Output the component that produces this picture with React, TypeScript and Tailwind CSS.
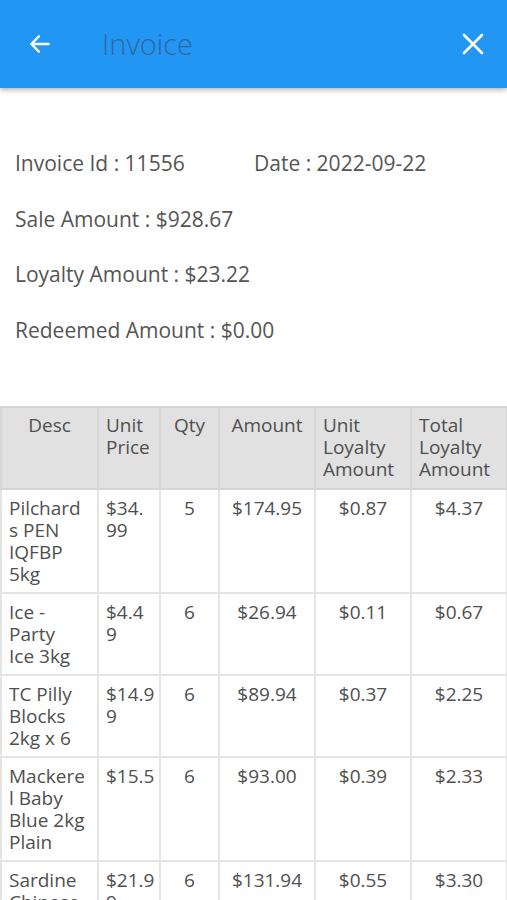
import React from 'react';

// desc / price are kept as the wrapped lines the app shows
type Line = {
  desc: string[];
  price: string[];
  qty: number;
  amount: string;
  unitLoyalty: string;
  totalLoyalty: string;
};

const lines: Line[] = [
  { desc: ['Pilchard', 's PEN', 'IQFBP', '5kg'], price: ['$34.', '99'], qty: 5, amount: '$174.95', unitLoyalty: '$0.87', totalLoyalty: '$4.37' },
  { desc: ['Ice -', 'Party', 'Ice 3kg'], price: ['$4.4', '9'], qty: 6, amount: '$26.94', unitLoyalty: '$0.11', totalLoyalty: '$0.67' },
  { desc: ['TC Pilly', 'Blocks', '2kg x 6'], price: ['$14.9', '9'], qty: 6, amount: '$89.94', unitLoyalty: '$0.37', totalLoyalty: '$2.25' },
  { desc: ['Mackere', 'l Baby', 'Blue 2kg', 'Plain'], price: ['$15.5'], qty: 6, amount: '$93.00', unitLoyalty: '$0.39', totalLoyalty: '$2.33' },
  { desc: ['Sardine', 'Chinese', '5kg'], price: ['$21.9', '9'], qty: 6, amount: '$131.94', unitLoyalty: '$0.55', totalLoyalty: '$3.30' },
];

const headers = ['Desc', 'Unit Price', 'Qty', 'Amount', 'Unit Loyalty Amount', 'Total Loyalty Amount'];

const cell = 'border-2 border-[#e4e4e4] pt-[7px] pb-[7px] align-top';

export default function App() {
  return (
    <div className="min-h-[900px] bg-white text-[#555]" style={{ fontFamily: '"Open Sans", "Noto Sans", sans-serif' }}>
      <header className="h-[88px] bg-[#2196f3] flex items-center pl-[27px] pr-[21px] shadow-[0_2px_5px_rgba(0,0,0,0.3)] relative z-10">
        <button className="w-[26px] h-[26px] flex items-center justify-center text-white">
          <svg width="26" height="26" viewBox="0 0 24 24" fill="none" stroke="currentColor" strokeWidth={2.2} strokeLinecap="round" strokeLinejoin="round">
            <path d="M20 12H4M11 5l-7 7 7 7" />
          </svg>
        </button>
        <h1 className="ml-[49px] text-[29px] font-light text-[#3467a0] flex-1">Invoice</h1>
        <button className="w-[26px] h-[26px] flex items-center justify-center text-white">
          <svg width="24" height="24" viewBox="0 0 24 24" fill="none" stroke="currentColor" strokeWidth={2.6} strokeLinecap="round">
            <path d="M3 3l18 18M21 3L3 21" />
          </svg>
        </button>
      </header>

      <div className="px-[15px] pt-[61px] flex flex-col gap-[27.5px] text-[21px] leading-[28px]">
        <div className="flex">
          <span className="w-[239px]">Invoice Id : 11556</span>
          <span>Date : 2022-09-22</span>
        </div>
        <p>Sale Amount : $928.67</p>
        <p>Loyalty Amount : $23.22</p>
        <p>Redeemed Amount : $0.00</p>
      </div>

      <table className="mt-[62px] w-[506px] table-fixed border-collapse text-[19px] leading-[22px] text-[#4f4f4f]">
        <colgroup>
          <col className="w-[97px]" />
          <col className="w-[62px]" />
          <col className="w-[59px]" />
          <col className="w-[96px]" />
          <col className="w-[96px]" />
          <col className="w-[96px]" />
        </colgroup>
        <thead>
          <tr className="bg-[#e1e1e1]">
            {headers.map((h) => (
              <th key={h} className="border-2 border-[#d6d6d6] px-[7px] pt-[6px] pb-[8px] font-normal text-center align-top">
                <span className="inline-block text-left">{h}</span>
              </th>
            ))}
          </tr>
        </thead>
        <tbody>
          {lines.map((l) => (
            <tr key={l.amount}>
              <td className={`${cell} pl-[7px] pr-[2px]`}>
                {l.desc.map((d) => (
                  <span key={d} className="block whitespace-nowrap">{d}</span>
                ))}
              </td>
              <td className={`${cell} pl-[7px] pr-[2px]`}>
                {l.price.map((p) => (
                  <span key={p} className="block whitespace-nowrap">{p}</span>
                ))}
              </td>
              <td className={`${cell} px-[4px] text-center`}>{l.qty}</td>
              <td className={`${cell} px-[4px] text-center`}>{l.amount}</td>
              <td className={`${cell} px-[4px] text-center`}>{l.unitLoyalty}</td>
              <td className={`${cell} px-[4px] text-center`}>{l.totalLoyalty}</td>
            </tr>
          ))}
        </tbody>
      </table>
    </div>
  );
}
